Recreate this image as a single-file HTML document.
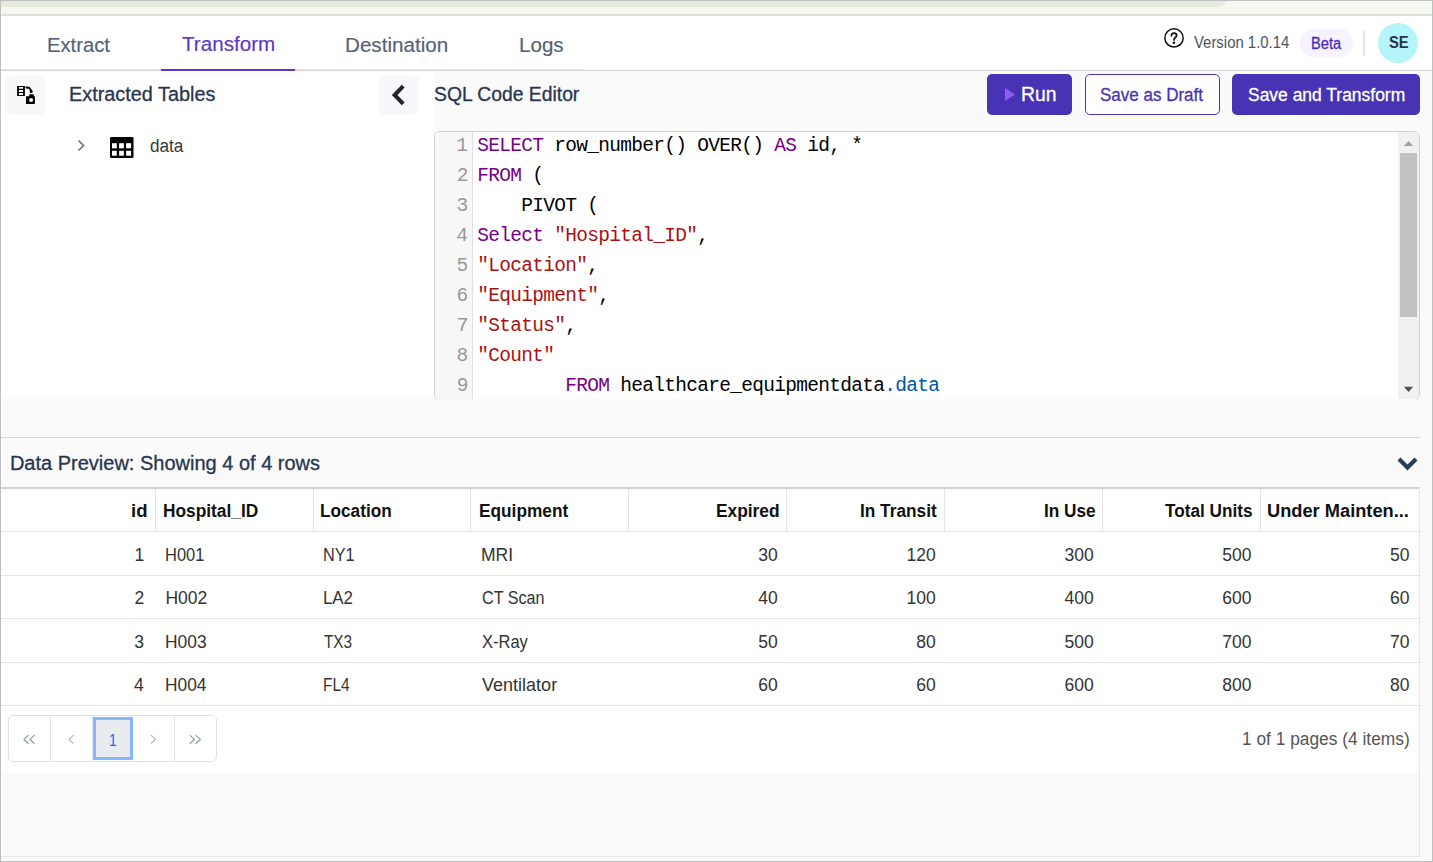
<!DOCTYPE html>
<html><head><meta charset="utf-8"><title>Transform</title>
<style>
html,body{margin:0;padding:0}
body{width:1433px;height:862px;position:relative;overflow:hidden;background:#fafafa;font-family:"Liberation Sans",sans-serif}
.t{position:absolute;white-space:nowrap}
</style></head><body>
<div style="position:absolute;left:1px;top:1px;width:1431px;height:6px;background:#f6f9f0"></div>
<div style="position:absolute;left:1px;top:1px;width:1215px;height:6px;background:#e3ebdc"></div>
<svg style="position:absolute;left:1216px;top:1px" width="14" height="6"><path d="M0 0 L12 0 C9 0 8 6 2 6 L0 6 Z" fill="#e3ebdc"/></svg>
<div style="position:absolute;left:1px;top:7px;width:1431px;height:7px;background:#f6f9f0"></div>
<div style="position:absolute;left:1px;top:14px;width:1431px;height:2px;background:#dee2d7"></div>
<div style="position:absolute;left:1px;top:16px;width:1431px;height:53px;background:#ffffff"></div>
<div style="position:absolute;left:1px;top:70px;width:1431px;height:1px;background:#d5d5d7"></div>
<div style="position:absolute;left:1px;top:69px;width:583px;height:1px;background:#e3e6ea"></div>
<div style="position:absolute;left:161px;top:69px;width:134px;height:2px;background:#5c35cb"></div>
<div class="t" style="left:47.28px;top:32.87px;font-size:20px;line-height:24.0px;color:#546178;font-family:'Liberation Sans', sans-serif;font-weight:normal;transform:scaleX(1.0116);transform-origin:0 0;-webkit-text-stroke:0.15px currentColor;">Extract</div>
<div class="t" style="left:181.99px;top:31.77px;font-size:20px;line-height:24.0px;color:#5c35cb;font-family:'Liberation Sans', sans-serif;font-weight:normal;transform:scaleX(1.0316);transform-origin:0 0;-webkit-text-stroke:0.15px currentColor;">Transform</div>
<div class="t" style="left:345.05px;top:32.97px;font-size:20px;line-height:24.0px;color:#546178;font-family:'Liberation Sans', sans-serif;font-weight:normal;transform:scaleX(1.0309);transform-origin:0 0;-webkit-text-stroke:0.15px currentColor;">Destination</div>
<div class="t" style="left:519.25px;top:33.07px;font-size:20px;line-height:24.0px;color:#546178;font-family:'Liberation Sans', sans-serif;font-weight:normal;transform:scaleX(1.0292);transform-origin:0 0;-webkit-text-stroke:0.15px currentColor;">Logs</div>
<svg style="position:absolute;left:1163px;top:27px" width="22" height="22" viewBox="0 0 22 22"><circle cx="11" cy="10.9" r="9.15" fill="none" stroke="#111" stroke-width="1.5"/><path d="M8.4 8.7 C8.4 7.1 9.6 6.1 11 6.1 C12.5 6.1 13.6 7.1 13.6 8.4 C13.6 10.1 11.1 10.6 11 12.9" fill="none" stroke="#111" stroke-width="1.8" stroke-linecap="round"/><circle cx="10.9" cy="15.8" r="1.25" fill="#111"/></svg>
<div class="t" style="left:1194.33px;top:33.05px;font-size:16px;line-height:19.2px;color:#4b5563;font-family:'Liberation Sans', sans-serif;font-weight:normal;transform:scaleX(0.9316);transform-origin:0 0;">Version 1.0.14</div>
<div style="position:absolute;left:1300px;top:29px;width:53px;height:28px;background:#f6f3fe;border-radius:14px"></div>
<div class="t" style="left:1310.83px;top:33.65px;font-size:16px;line-height:19.2px;color:#4a2fbf;font-family:'Liberation Sans', sans-serif;font-weight:normal;transform:scaleX(0.9177);transform-origin:0 0;-webkit-text-stroke:0.3px currentColor;">Beta</div>
<div style="position:absolute;left:1363px;top:31px;width:2px;height:25px;background:#e5e7eb"></div>
<div style="position:absolute;left:1378px;top:23px;width:40px;height:40px;background:#b3f5f9;border-radius:50%"></div>
<div class="t" style="left:1388.56px;top:33.05px;font-size:16px;line-height:19.2px;color:#27344a;font-family:'Liberation Sans', sans-serif;font-weight:bold;transform:scaleX(0.9239);transform-origin:0 0;">SE</div>
<div style="position:absolute;left:1px;top:71px;width:433px;height:328px;background:#ffffff"></div>
<div style="position:absolute;left:5px;top:75px;width:40px;height:40px;background:#f7f8fa;border-radius:7px"></div>
<svg style="position:absolute;left:13px;top:82px" width="26" height="26" viewBox="0 0 26 26"><path fill="#000" fill-rule="evenodd" d="M4.1 3.9 H11.9 V14 H4.1 Z M5.9 5.1 V6.8 H10.1 V5.1 Z M5.9 8.1 V9.9 H10.1 V8.1 Z M5.9 11.1 V12.9 H10.1 V11.1 Z"/><path d="M13.3 5.5 C15.6 5.3 17.4 6.4 17.9 8.6" fill="none" stroke="#000" stroke-width="1.9" stroke-linecap="round"/><circle cx="18.2" cy="9.5" r="1.5" fill="#000"/><path fill="#000" fill-rule="evenodd" d="M13 14.2 H16.3 V12.8 Q16.3 12.2 17 12.2 H20.1 Q20.8 12.2 20.8 12.8 V14.2 H21.9 V21.9 H13 Z M18.1 16.1 A2 2 0 1 0 18.1 20.1 A2 2 0 1 0 18.1 16.1 Z"/></svg>
<div class="t" style="left:68.51px;top:81.97px;font-size:20px;line-height:24.0px;color:#283550;font-family:'Liberation Sans', sans-serif;font-weight:normal;transform:scaleX(0.9924);transform-origin:0 0;-webkit-text-stroke:0.3px currentColor;">Extracted Tables</div>
<div style="position:absolute;left:379px;top:75px;width:40px;height:40px;background:#f7f8fa;border-radius:7px"></div>
<svg style="position:absolute;left:389px;top:83px" width="20" height="24" viewBox="0 0 20 24"><path d="M14.2 3.2 L5.6 12 L14.2 20.8" fill="none" stroke="#212529" stroke-width="4" stroke-linejoin="miter"/></svg>
<svg style="position:absolute;left:75px;top:138px" width="12" height="15" viewBox="0 0 12 15"><path d="M3.5 2.5 L8.5 7.5 L3.5 12.5" fill="none" stroke="#6b7280" stroke-width="1.6"/></svg>
<svg style="position:absolute;left:110px;top:137px" width="24" height="21" viewBox="0 0 24 21"><rect x="0" y="0" width="23.5" height="21" rx="1.2" fill="#000"/><rect x="2" y="6.2" width="4.8" height="5.1" fill="#fff"/><rect x="9.1" y="6.2" width="4.8" height="5.1" fill="#fff"/><rect x="16.1" y="6.2" width="5" height="5.1" fill="#fff"/><rect x="2" y="13.8" width="4.8" height="4.9" fill="#fff"/><rect x="9.1" y="13.8" width="4.8" height="4.9" fill="#fff"/><rect x="16.1" y="13.8" width="5" height="4.9" fill="#fff"/></svg>
<div class="t" style="left:150.21px;top:136.26px;font-size:18px;line-height:21.6px;color:#383838;font-family:'Liberation Sans', sans-serif;font-weight:normal;transform:scaleX(0.9536);transform-origin:0 0;">data</div>
<div class="t" style="left:434.23px;top:81.97px;font-size:20px;line-height:24.0px;color:#283550;font-family:'Liberation Sans', sans-serif;font-weight:normal;transform:scaleX(0.9658);transform-origin:0 0;-webkit-text-stroke:0.3px currentColor;">SQL Code Editor</div>
<div style="position:absolute;left:987px;top:74px;width:85px;height:41px;background:#4733b3;border-radius:5px"></div>
<svg style="position:absolute;left:1004px;top:87px" width="12" height="15" viewBox="0 0 12 15"><path d="M1 1 L11 7.5 L1 14 Z" fill="#8b5cf6"/></svg>
<div class="t" style="left:1021.15px;top:81.97px;font-size:20px;line-height:24.0px;color:#ffffff;font-family:'Liberation Sans', sans-serif;font-weight:normal;transform:scaleX(0.9675);transform-origin:0 0;-webkit-text-stroke:0.3px currentColor;">Run</div>
<div style="position:absolute;left:1085px;top:74px;width:135px;height:41px;background:#ffffff;border:1px solid #4733b3;border-radius:5px;box-sizing:border-box"></div>
<div class="t" style="left:1100.43px;top:84.86px;font-size:18px;line-height:21.6px;color:#4733b3;font-family:'Liberation Sans', sans-serif;font-weight:normal;transform:scaleX(0.9446);transform-origin:0 0;-webkit-text-stroke:0.3px currentColor;">Save as Draft</div>
<div style="position:absolute;left:1232px;top:74px;width:188px;height:41px;background:#4733b3;border-radius:5px"></div>
<div class="t" style="left:1248.21px;top:84.86px;font-size:18px;line-height:21.6px;color:#ffffff;font-family:'Liberation Sans', sans-serif;font-weight:normal;transform:scaleX(0.9700);transform-origin:0 0;-webkit-text-stroke:0.3px currentColor;">Save and Transform</div>
<div style="position:absolute;left:434px;top:131px;width:986px;height:268px;overflow:hidden"><div style="position:absolute;left:0;top:0;width:986px;height:269px;box-sizing:border-box;border:1px solid #c9d0de;border-radius:6px;background:#fff;overflow:hidden"><div style="position:absolute;left:0;top:0;width:37px;height:300px;background:#f7f7f7;border-right:1px solid #e0e0e0"></div><div style="position:absolute;left:963px;top:0;width:21px;height:300px;background:#f1f1f1"></div><div style="position:absolute;left:965px;top:21px;width:17px;height:164px;background:#c1c1c1"></div><svg style="position:absolute;left:966px;top:7px" width="15" height="10"><path d="M2.9 7 L7.55 1.9 L12.2 7 Z" fill="#a3a3a3"/></svg><svg style="position:absolute;left:966px;top:251px" width="15" height="10"><path d="M2.9 3.7 L7.55 8.9 L12.2 3.7 Z" fill="#505050"/></svg></div></div>
<div style="position:absolute;left:0;top:0;width:1433px;height:399px;overflow:hidden"><div class="t" style="left:477.2px;top:130.61px;font-family:'Liberation Mono',monospace;font-size:19.5px;line-height:30px;white-space:pre;letter-spacing:-0.7px"><span style="color:#770088">SELECT</span><span style="color:#000000">&nbsp;row_number()&nbsp;OVER()&nbsp;</span><span style="color:#770088">AS</span><span style="color:#000000">&nbsp;id,&nbsp;*</span></div><div class="t" style="left:456.27px;top:134.91px;font-size:19.5px;line-height:23.4px;color:#999999;font-family:'Liberation Mono', monospace;font-weight:normal;">1</div><div class="t" style="left:477.2px;top:160.61px;font-family:'Liberation Mono',monospace;font-size:19.5px;line-height:30px;white-space:pre;letter-spacing:-0.7px"><span style="color:#770088">FROM</span><span style="color:#000000">&nbsp;(</span></div><div class="t" style="left:456.67px;top:164.91px;font-size:19.5px;line-height:23.4px;color:#999999;font-family:'Liberation Mono', monospace;font-weight:normal;">2</div><div class="t" style="left:477.2px;top:190.61px;font-family:'Liberation Mono',monospace;font-size:19.5px;line-height:30px;white-space:pre;letter-spacing:-0.7px"><span style="color:#000000">&nbsp;&nbsp;&nbsp;&nbsp;PIVOT&nbsp;(</span></div><div class="t" style="left:456.57px;top:194.91px;font-size:19.5px;line-height:23.4px;color:#999999;font-family:'Liberation Mono', monospace;font-weight:normal;">3</div><div class="t" style="left:477.2px;top:220.61px;font-family:'Liberation Mono',monospace;font-size:19.5px;line-height:30px;white-space:pre;letter-spacing:-0.7px"><span style="color:#770088">Select</span><span style="color:#000000">&nbsp;</span><span style="color:#aa1111">"Hospital_ID"</span><span style="color:#000000">,</span></div><div class="t" style="left:456.27px;top:224.91px;font-size:19.5px;line-height:23.4px;color:#999999;font-family:'Liberation Mono', monospace;font-weight:normal;">4</div><div class="t" style="left:477.2px;top:250.61px;font-family:'Liberation Mono',monospace;font-size:19.5px;line-height:30px;white-space:pre;letter-spacing:-0.7px"><span style="color:#aa1111">"Location"</span><span style="color:#000000">,</span></div><div class="t" style="left:456.57px;top:254.91px;font-size:19.5px;line-height:23.4px;color:#999999;font-family:'Liberation Mono', monospace;font-weight:normal;">5</div><div class="t" style="left:477.2px;top:280.61px;font-family:'Liberation Mono',monospace;font-size:19.5px;line-height:30px;white-space:pre;letter-spacing:-0.7px"><span style="color:#aa1111">"Equipment"</span><span style="color:#000000">,</span></div><div class="t" style="left:456.57px;top:284.91px;font-size:19.5px;line-height:23.4px;color:#999999;font-family:'Liberation Mono', monospace;font-weight:normal;">6</div><div class="t" style="left:477.2px;top:310.61px;font-family:'Liberation Mono',monospace;font-size:19.5px;line-height:30px;white-space:pre;letter-spacing:-0.7px"><span style="color:#aa1111">"Status"</span><span style="color:#000000">,</span></div><div class="t" style="left:456.86px;top:314.91px;font-size:19.5px;line-height:23.4px;color:#999999;font-family:'Liberation Mono', monospace;font-weight:normal;">7</div><div class="t" style="left:477.2px;top:340.61px;font-family:'Liberation Mono',monospace;font-size:19.5px;line-height:30px;white-space:pre;letter-spacing:-0.7px"><span style="color:#aa1111">"Count"</span></div><div class="t" style="left:456.57px;top:344.91px;font-size:19.5px;line-height:23.4px;color:#999999;font-family:'Liberation Mono', monospace;font-weight:normal;">8</div><div class="t" style="left:477.2px;top:370.61px;font-family:'Liberation Mono',monospace;font-size:19.5px;line-height:30px;white-space:pre;letter-spacing:-0.7px"><span style="color:#000000">&nbsp;&nbsp;&nbsp;&nbsp;&nbsp;&nbsp;&nbsp;&nbsp;</span><span style="color:#770088">FROM</span><span style="color:#000000">&nbsp;healthcare_equipmentdata</span><span style="color:#0055aa">.data</span></div><div class="t" style="left:456.67px;top:374.91px;font-size:19.5px;line-height:23.4px;color:#999999;font-family:'Liberation Mono', monospace;font-weight:normal;">9</div></div>
<div style="position:absolute;left:1px;top:437px;width:1419px;height:1px;background:#d6d6d6"></div>
<div class="t" style="left:9.90px;top:451.27px;font-size:20px;line-height:24.0px;color:#283550;font-family:'Liberation Sans', sans-serif;font-weight:normal;-webkit-text-stroke:0.3px currentColor;">Data Preview: Showing 4 of 4 rows</div>
<svg style="position:absolute;left:1396px;top:455px" width="24" height="18" viewBox="0 0 24 18"><path d="M3 4 L11.5 12.5 L20 4" fill="none" stroke="#2d3b55" stroke-width="4.2"/></svg>
<div style="position:absolute;left:1px;top:487px;width:1419px;height:2px;background:#d2d2d2"></div>
<div style="position:absolute;left:1px;top:489px;width:1418px;height:283px;background:#ffffff"></div>
<div style="position:absolute;left:1419px;top:487px;width:1px;height:370px;background:#e4e7eb"></div>
<div style="position:absolute;left:1px;top:856px;width:1419px;height:1px;background:#e4e7eb"></div>
<div style="position:absolute;left:1px;top:531px;width:1418px;height:1px;background:#e2e5ea"></div>
<div style="position:absolute;left:1px;top:575px;width:1418px;height:1px;background:#e2e5ea"></div>
<div style="position:absolute;left:1px;top:618px;width:1418px;height:1px;background:#e2e5ea"></div>
<div style="position:absolute;left:1px;top:662px;width:1418px;height:1px;background:#e2e5ea"></div>
<div style="position:absolute;left:1px;top:705px;width:1418px;height:1px;background:#e2e5ea"></div>
<div style="position:absolute;left:155px;top:489px;width:1px;height:42px;background:#e2e5ea"></div>
<div style="position:absolute;left:313px;top:489px;width:1px;height:42px;background:#e2e5ea"></div>
<div style="position:absolute;left:470px;top:489px;width:1px;height:42px;background:#e2e5ea"></div>
<div style="position:absolute;left:628px;top:489px;width:1px;height:42px;background:#e2e5ea"></div>
<div style="position:absolute;left:786px;top:489px;width:1px;height:42px;background:#e2e5ea"></div>
<div style="position:absolute;left:944px;top:489px;width:1px;height:42px;background:#e2e5ea"></div>
<div style="position:absolute;left:1102px;top:489px;width:1px;height:42px;background:#e2e5ea"></div>
<div style="position:absolute;left:1260px;top:489px;width:1px;height:42px;background:#e2e5ea"></div>
<div class="t" style="left:130.90px;top:501.06px;font-size:18px;line-height:21.6px;color:#111111;font-family:'Liberation Sans', sans-serif;font-weight:bold;transform:scaleX(1.0302);transform-origin:0 0;">id</div>
<div class="t" style="left:162.62px;top:501.06px;font-size:18px;line-height:21.6px;color:#111111;font-family:'Liberation Sans', sans-serif;font-weight:bold;transform:scaleX(0.9618);transform-origin:0 0;">Hospital_ID</div>
<div class="t" style="left:320.18px;top:501.06px;font-size:18px;line-height:21.6px;color:#111111;font-family:'Liberation Sans', sans-serif;font-weight:bold;transform:scaleX(0.9557);transform-origin:0 0;">Location</div>
<div class="t" style="left:478.68px;top:501.06px;font-size:18px;line-height:21.6px;color:#111111;font-family:'Liberation Sans', sans-serif;font-weight:bold;transform:scaleX(0.9594);transform-origin:0 0;">Equipment</div>
<div class="t" style="left:716.47px;top:501.06px;font-size:18px;line-height:21.6px;color:#111111;font-family:'Liberation Sans', sans-serif;font-weight:bold;transform:scaleX(0.9634);transform-origin:0 0;">Expired</div>
<div class="t" style="left:860.38px;top:501.06px;font-size:18px;line-height:21.6px;color:#111111;font-family:'Liberation Sans', sans-serif;font-weight:bold;transform:scaleX(0.9584);transform-origin:0 0;">In Transit</div>
<div class="t" style="left:1043.58px;top:501.06px;font-size:18px;line-height:21.6px;color:#111111;font-family:'Liberation Sans', sans-serif;font-weight:bold;transform:scaleX(0.9559);transform-origin:0 0;">In Use</div>
<div class="t" style="left:1165.43px;top:501.06px;font-size:18px;line-height:21.6px;color:#111111;font-family:'Liberation Sans', sans-serif;font-weight:bold;transform:scaleX(0.9557);transform-origin:0 0;">Total Units</div>
<div class="t" style="left:1267.31px;top:501.06px;font-size:18px;line-height:21.6px;color:#111111;font-family:'Liberation Sans', sans-serif;font-weight:bold;transform:scaleX(1.0138);transform-origin:0 0;">Under Mainten...</div>
<div class="t" style="left:134.38px;top:544.73px;font-size:17.5px;line-height:21.0px;color:#333333;font-family:'Liberation Sans', sans-serif;font-weight:normal;">1</div>
<div class="t" style="left:165.48px;top:544.73px;font-size:17.5px;line-height:21.0px;color:#333333;font-family:'Liberation Sans', sans-serif;font-weight:normal;transform:scaleX(0.9410);transform-origin:0 0;">H001</div>
<div class="t" style="left:323.20px;top:544.73px;font-size:17.5px;line-height:21.0px;color:#333333;font-family:'Liberation Sans', sans-serif;font-weight:normal;transform:scaleX(0.9294);transform-origin:0 0;">NY1</div>
<div class="t" style="left:481.00px;top:544.73px;font-size:17.5px;line-height:21.0px;color:#333333;font-family:'Liberation Sans', sans-serif;font-weight:normal;">MRI</div>
<div class="t" style="left:758.29px;top:544.73px;font-size:17.5px;line-height:21.0px;color:#333333;font-family:'Liberation Sans', sans-serif;font-weight:normal;">30</div>
<div class="t" style="left:906.48px;top:544.73px;font-size:17.5px;line-height:21.0px;color:#333333;font-family:'Liberation Sans', sans-serif;font-weight:normal;">120</div>
<div class="t" style="left:1064.57px;top:544.73px;font-size:17.5px;line-height:21.0px;color:#333333;font-family:'Liberation Sans', sans-serif;font-weight:normal;">300</div>
<div class="t" style="left:1222.27px;top:544.73px;font-size:17.5px;line-height:21.0px;color:#333333;font-family:'Liberation Sans', sans-serif;font-weight:normal;">500</div>
<div class="t" style="left:1390.09px;top:544.73px;font-size:17.5px;line-height:21.0px;color:#333333;font-family:'Liberation Sans', sans-serif;font-weight:normal;">50</div>
<div class="t" style="left:134.46px;top:587.93px;font-size:17.5px;line-height:21.0px;color:#333333;font-family:'Liberation Sans', sans-serif;font-weight:normal;">2</div>
<div class="t" style="left:165.40px;top:587.93px;font-size:17.5px;line-height:21.0px;color:#333333;font-family:'Liberation Sans', sans-serif;font-weight:normal;">H002</div>
<div class="t" style="left:323.15px;top:587.93px;font-size:17.5px;line-height:21.0px;color:#333333;font-family:'Liberation Sans', sans-serif;font-weight:normal;transform:scaleX(0.9628);transform-origin:0 0;">LA2</div>
<div class="t" style="left:481.59px;top:587.93px;font-size:17.5px;line-height:21.0px;color:#333333;font-family:'Liberation Sans', sans-serif;font-weight:normal;transform:scaleX(0.9237);transform-origin:0 0;">CT Scan</div>
<div class="t" style="left:758.29px;top:587.93px;font-size:17.5px;line-height:21.0px;color:#333333;font-family:'Liberation Sans', sans-serif;font-weight:normal;">40</div>
<div class="t" style="left:906.48px;top:587.93px;font-size:17.5px;line-height:21.0px;color:#333333;font-family:'Liberation Sans', sans-serif;font-weight:normal;">100</div>
<div class="t" style="left:1064.57px;top:587.93px;font-size:17.5px;line-height:21.0px;color:#333333;font-family:'Liberation Sans', sans-serif;font-weight:normal;">400</div>
<div class="t" style="left:1222.27px;top:587.93px;font-size:17.5px;line-height:21.0px;color:#333333;font-family:'Liberation Sans', sans-serif;font-weight:normal;">600</div>
<div class="t" style="left:1390.09px;top:587.93px;font-size:17.5px;line-height:21.0px;color:#333333;font-family:'Liberation Sans', sans-serif;font-weight:normal;">60</div>
<div class="t" style="left:134.29px;top:631.63px;font-size:17.5px;line-height:21.0px;color:#333333;font-family:'Liberation Sans', sans-serif;font-weight:normal;">3</div>
<div class="t" style="left:165.41px;top:631.63px;font-size:17.5px;line-height:21.0px;color:#333333;font-family:'Liberation Sans', sans-serif;font-weight:normal;transform:scaleX(0.9943);transform-origin:0 0;">H003</div>
<div class="t" style="left:324.19px;top:631.63px;font-size:17.5px;line-height:21.0px;color:#333333;font-family:'Liberation Sans', sans-serif;font-weight:normal;transform:scaleX(0.8757);transform-origin:0 0;">TX3</div>
<div class="t" style="left:481.99px;top:631.63px;font-size:17.5px;line-height:21.0px;color:#333333;font-family:'Liberation Sans', sans-serif;font-weight:normal;transform:scaleX(0.9417);transform-origin:0 0;">X-Ray</div>
<div class="t" style="left:758.29px;top:631.63px;font-size:17.5px;line-height:21.0px;color:#333333;font-family:'Liberation Sans', sans-serif;font-weight:normal;">50</div>
<div class="t" style="left:916.19px;top:631.63px;font-size:17.5px;line-height:21.0px;color:#333333;font-family:'Liberation Sans', sans-serif;font-weight:normal;">80</div>
<div class="t" style="left:1064.57px;top:631.63px;font-size:17.5px;line-height:21.0px;color:#333333;font-family:'Liberation Sans', sans-serif;font-weight:normal;">500</div>
<div class="t" style="left:1222.27px;top:631.63px;font-size:17.5px;line-height:21.0px;color:#333333;font-family:'Liberation Sans', sans-serif;font-weight:normal;">700</div>
<div class="t" style="left:1390.09px;top:631.63px;font-size:17.5px;line-height:21.0px;color:#333333;font-family:'Liberation Sans', sans-serif;font-weight:normal;">70</div>
<div class="t" style="left:134.11px;top:675.13px;font-size:17.5px;line-height:21.0px;color:#333333;font-family:'Liberation Sans', sans-serif;font-weight:normal;">4</div>
<div class="t" style="left:165.41px;top:675.13px;font-size:17.5px;line-height:21.0px;color:#333333;font-family:'Liberation Sans', sans-serif;font-weight:normal;transform:scaleX(0.9900);transform-origin:0 0;">H004</div>
<div class="t" style="left:323.26px;top:675.13px;font-size:17.5px;line-height:21.0px;color:#333333;font-family:'Liberation Sans', sans-serif;font-weight:normal;transform:scaleX(0.8838);transform-origin:0 0;">FL4</div>
<div class="t" style="left:482.31px;top:675.13px;font-size:17.5px;line-height:21.0px;color:#333333;font-family:'Liberation Sans', sans-serif;font-weight:normal;transform:scaleX(1.0298);transform-origin:0 0;">Ventilator</div>
<div class="t" style="left:758.29px;top:675.13px;font-size:17.5px;line-height:21.0px;color:#333333;font-family:'Liberation Sans', sans-serif;font-weight:normal;">60</div>
<div class="t" style="left:916.19px;top:675.13px;font-size:17.5px;line-height:21.0px;color:#333333;font-family:'Liberation Sans', sans-serif;font-weight:normal;">60</div>
<div class="t" style="left:1064.57px;top:675.13px;font-size:17.5px;line-height:21.0px;color:#333333;font-family:'Liberation Sans', sans-serif;font-weight:normal;">600</div>
<div class="t" style="left:1222.27px;top:675.13px;font-size:17.5px;line-height:21.0px;color:#333333;font-family:'Liberation Sans', sans-serif;font-weight:normal;">800</div>
<div class="t" style="left:1390.09px;top:675.13px;font-size:17.5px;line-height:21.0px;color:#333333;font-family:'Liberation Sans', sans-serif;font-weight:normal;">80</div>
<div style="position:absolute;left:8px;top:715px;width:209px;height:47px;border:1px solid #dee2e6;border-radius:5px;box-sizing:border-box;background:#fff"></div>
<div style="position:absolute;left:50px;top:716px;width:1px;height:45px;background:#dee2e6"></div>
<div style="position:absolute;left:92px;top:716px;width:1px;height:45px;background:#dee2e6"></div>
<div style="position:absolute;left:174px;top:716px;width:1px;height:45px;background:#dee2e6"></div>
<div style="position:absolute;left:93px;top:717px;width:40px;height:43px;background:#e9ecef;box-sizing:border-box;border:3px solid #86b7fe"></div>
<div class="t" style="left:108.57px;top:730.51px;font-size:17px;line-height:20.4px;color:#0d6efd;font-family:'Liberation Sans', sans-serif;font-weight:normal;transform:scaleX(0.8114);transform-origin:0 0;">1</div>
<svg style="position:absolute;left:20px;top:730px" width="190" height="20" viewBox="0 0 190 20"><path d="M8.4 5.1 L4 9.4 L8.4 13.7 M14.5 5.1 L10.1 9.4 L14.5 13.7" fill="none" stroke="#8d99ab" stroke-width="1.2"/><path d="M53.6 5.1 L49.2 9.4 L53.6 13.7" fill="none" stroke="#a9b3c1" stroke-width="1.1"/><path d="M131 5.1 L135.6 9.4 L131 13.7" fill="none" stroke="#a9b3c1" stroke-width="1.1"/><path d="M169.8 5.1 L174.3 9.4 L169.8 13.7 M175.6 5.1 L180.4 9.4 L175.6 13.7" fill="none" stroke="#8d99ab" stroke-width="1.2"/></svg>
<div class="t" style="left:1241.90px;top:729.03px;font-size:17.5px;line-height:21.0px;color:#555555;font-family:'Liberation Sans', sans-serif;font-weight:normal;transform:scaleX(0.9906);transform-origin:0 0;">1 of 1 pages (4 items)</div>
<div style="position:absolute;left:0px;top:0px;width:1433px;height:862px;box-sizing:border-box;border:1px solid #bfbfbf;pointer-events:none"></div>
</body></html>
